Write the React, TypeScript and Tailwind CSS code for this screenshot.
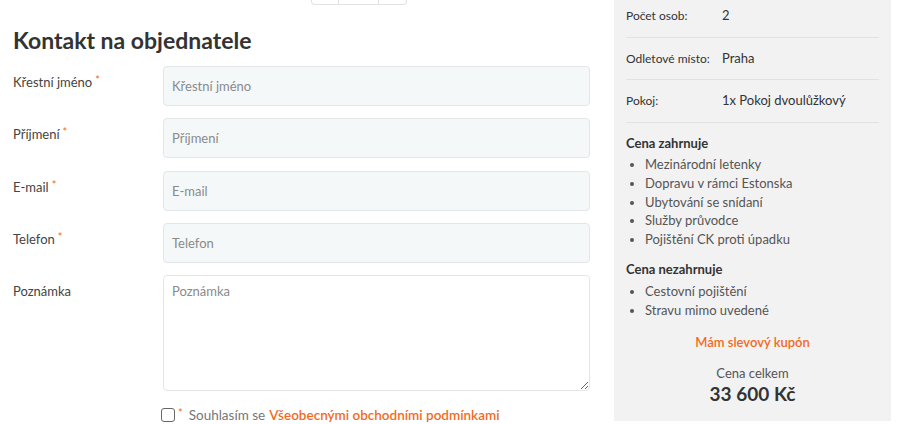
import React from 'react';

const fields = [
  { label: 'Křestní jméno', required: true },
  { label: 'Příjmení', required: true },
  { label: 'E-mail', required: true },
  { label: 'Telefon', required: true },
];

const included = [
  'Mezinárodní letenky',
  'Dopravu v rámci Estonska',
  'Ubytování se snídaní',
  'Služby průvodce',
  'Pojištění CK proti úpadku',
];

const excluded = ['Cestovní pojištění', 'Stravu mimo uvedené'];

function Star() {
  return <span className="text-[#f26b1d] text-[11px] align-top ml-[3px] relative -top-[2px]">*</span>;
}

export default function App() {
  return (
    <div className="w-[900px] h-[424px] overflow-hidden bg-white flex font-['Lato',sans-serif] text-[#444]">
      {/* form column */}
      <div className="w-[614px] shrink-0 pl-[13px] pr-[24px]">
        <div className="flex ml-[298px] h-[5px]">
          <div className="w-[28px] border border-t-0 border-[#e3e3e3] rounded-bl-[4px]" />
          <div className="w-[39px] border-b border-[#e3e3e3]" />
          <div className="w-[29px] border border-t-0 border-[#e3e3e3] rounded-br-[4px]" />
        </div>
        <h2 className="mt-[21px] text-[23px] leading-[28px] font-bold text-[#333]">Kontakt na objednatele</h2>
        <div className="mt-[12px] flex flex-col gap-[12.25px]">
          {fields.map(f => (
            <div key={f.label} className="flex">
              <label className="w-[150px] shrink-0 pt-[7px] text-[13px] leading-[18px] text-[#444]">
                {f.label}
                {f.required && <Star />}
              </label>
              <input
                placeholder={f.label}
                className="w-[427px] h-[40px] bg-[#f5f8f9] border border-[#e3e6e8] rounded-[4px] px-2 text-[13px] placeholder:text-[#8a8a8a] outline-none"
              />
            </div>
          ))}
          <div className="flex">
            <label className="w-[150px] shrink-0 pt-[7px] text-[13px] leading-[18px] text-[#444]">Poznámka</label>
            <textarea
              placeholder="Poznámka"
              className="w-[427px] h-[116px] bg-white border border-[#e3e6e8] rounded-[4px] px-2 pt-[6px] text-[13px] leading-[18px] placeholder:text-[#8a8a8a] outline-none"
            />
          </div>
        </div>
        <div className="mt-[15px] ml-[148px] flex items-center text-[13.5px] leading-[18px]">
          <span className="w-[14px] h-[14px] border-[1.5px] border-[#666] rounded-[3px]" />
          <Star />
          <span className="ml-[6px] text-[#777]">Souhlasím se</span>
          <span className="ml-[4px] text-[#f26b1d] font-semibold">Všeobecnými obchodními podmínkami</span>
        </div>
      </div>

      {/* summary sidebar */}
      <div className="w-[277px] h-[421px] shrink-0 bg-[#f2f2f2] px-[12px] text-[13px]">
        <div className="flex items-center h-[38px] border-b border-[#e2e2e2]">
          <span className="w-[96px] text-[12px] text-[#333] -mt-[6px]">Počet osob:</span>
          <span className="text-[#333] -mt-[6px]">2</span>
        </div>
        <div className="flex items-center h-[42px] border-b border-[#e2e2e2]">
          <span className="w-[96px] text-[12px] text-[#333]">Odletové místo:</span>
          <span className="text-[#333]">Praha</span>
        </div>
        <div className="flex items-center h-[43px] border-b border-[#e2e2e2]">
          <span className="w-[96px] text-[12px] text-[#333]">Pokoj:</span>
          <span className="text-[#333]">1x Pokoj dvoulůžkový</span>
        </div>
        <h4 className="mt-[11px] font-bold text-[#333] leading-[18px]">Cena zahrnuje</h4>
        <ul className="mt-[3px] list-disc pl-[19px] text-[#555] leading-[18.75px]">
          {included.map(t => <li key={t}>{t}</li>)}
        </ul>
        <h4 className="mt-[11px] font-bold text-[#333] leading-[18px]">Cena nezahrnuje</h4>
        <ul className="mt-[4px] list-disc pl-[19px] text-[#555] leading-[19px]">
          {excluded.map(t => <li key={t}>{t}</li>)}
        </ul>
        <div className="mt-[13px] text-center text-[#f26b1d] font-semibold leading-[18px]">Mám slevový kupón</div>
        <div className="mt-[13px] text-center text-[#555] leading-[18px]">Cena celkem</div>
        <div className="text-center text-[19px] font-bold text-[#333] leading-[24px]">33 600 Kč</div>
      </div>
    </div>
  );
}
